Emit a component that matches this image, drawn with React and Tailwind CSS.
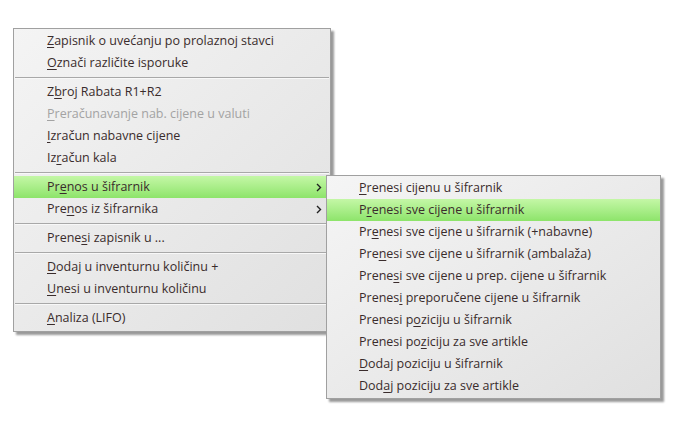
import React from 'react';

const font = { fontFamily: '"Segoe UI", "Open Sans", "Noto Sans", sans-serif' };

const mainItems = [
    { pre: '', u: 'Z', post: 'apisnik o uvećanju po prolaznoj stavci' },
    { pre: '', u: 'O', post: 'znači različite isporuke' },
    'sep',
    { pre: 'Z', u: 'b', post: 'roj Rabata R1+R2' },
    { pre: '', u: 'P', post: 'reračunavanje nab. cijene u valuti', disabled: true },
    { pre: '', u: 'I', post: 'zračun nabavne cijene' },
    { pre: 'Iz', u: 'r', post: 'ačun kala' },
    'sep',
    { pre: 'Pr', u: 'e', post: 'nos u šifrarnik', sub: true, active: true },
    { pre: 'Pre', u: 'n', post: 'os iz šifrarnika', sub: true },
    'sep',
    { pre: 'Prene', u: 's', post: 'i zapisnik u ...' },
    'sep',
    { pre: '', u: 'D', post: 'odaj u inventurnu količinu +' },
    { pre: '', u: 'U', post: 'nesi u inventurnu količinu' },
    'sep',
    { pre: '', u: 'A', post: 'naliza (LIFO)' },
];

const subItems = [
    { pre: '', u: 'P', post: 'renesi cijenu u šifrarnik' },
    { pre: 'P', u: 'r', post: 'enesi sve cijene u šifrarnik', active: true },
    { pre: 'Pr', u: 'e', post: 'nesi sve cijene u šifrarnik (+nabavne)' },
    { pre: 'Pre', u: 'n', post: 'esi sve cijene u šifrarnik (ambalaža)' },
    { pre: 'Prene', u: 's', post: 'i sve cijene u prep. cijene u šifrarnik' },
    { pre: 'Prenes', u: 'i', post: ' preporučene cijene u šifrarnik' },
    { pre: 'Prenesi p', u: 'o', post: 'ziciju u šifrarnik' },
    { pre: 'Prenesi po', u: 'z', post: 'iciju za sve artikle' },
    { pre: '', u: 'D', post: 'odaj poziciju u šifrarnik' },
    { pre: 'Dod', u: 'a', post: 'j poziciju za sve artikle' },
];

const Chevron = () => (
    <svg width="6" height="9" viewBox="0 0 6 9" className="ml-auto mr-[8px] shrink-0">
        <path d="M1 1 L4.5 4.5 L1 8" fill="none" stroke="#222" strokeWidth="1.4" />
    </svg>
);

const Item = ({ item, indent }) => (
    <div
        className={`h-[22px] flex items-center text-[12.5px] ${indent} ${
            item.active ? 'bg-gradient-to-b from-[#c4f7a6] to-[#8de46a]' : ''
        } ${item.disabled ? 'text-[#a3a3a3]' : 'text-[#3a2c2c]'}`}
    >
        <span className="whitespace-pre">
            {item.pre}
            <span className="underline underline-offset-2">{item.u}</span>
            {item.post}
        </span>
        {item.sub && <Chevron />}
    </div>
);

const Separator = () => (
    <div className="h-[7px] flex flex-col justify-center px-[1px]">
        <div className="h-px bg-[#a8a8a8]"></div>
        <div className="h-px bg-[#f8f8f8]"></div>
    </div>
);

const App = () => {
    return (
        <div className="relative w-[700px] h-[433px] bg-white overflow-hidden pt-[28px] pl-[13px]" style={font}>
            {/* main context menu */}
            <div className="w-[318px] border border-[#a0a0a0] bg-gradient-to-br from-[#f4f4f4] to-[#e0e0e0] pt-px pb-[2px] shadow-[3px_3px_2px_rgba(0,0,0,0.4)]">
                {mainItems.map((it, i) =>
                    it === 'sep' ? <Separator key={i} /> : <Item key={i} item={it} indent="pl-[33px]" />
                )}
            </div>

            {/* submenu, opened over the main menu */}
            <div className="absolute left-[326px] top-[175px] w-[335px] border border-[#a0a0a0] bg-gradient-to-br from-[#f5f5f5] to-[#e0e0e0] py-px shadow-[3px_3px_2px_rgba(0,0,0,0.4)]">
                {subItems.map((it, i) => (
                    <Item key={i} item={it} indent="pl-[32px]" />
                ))}
            </div>
        </div>
    );
};

export default App;
